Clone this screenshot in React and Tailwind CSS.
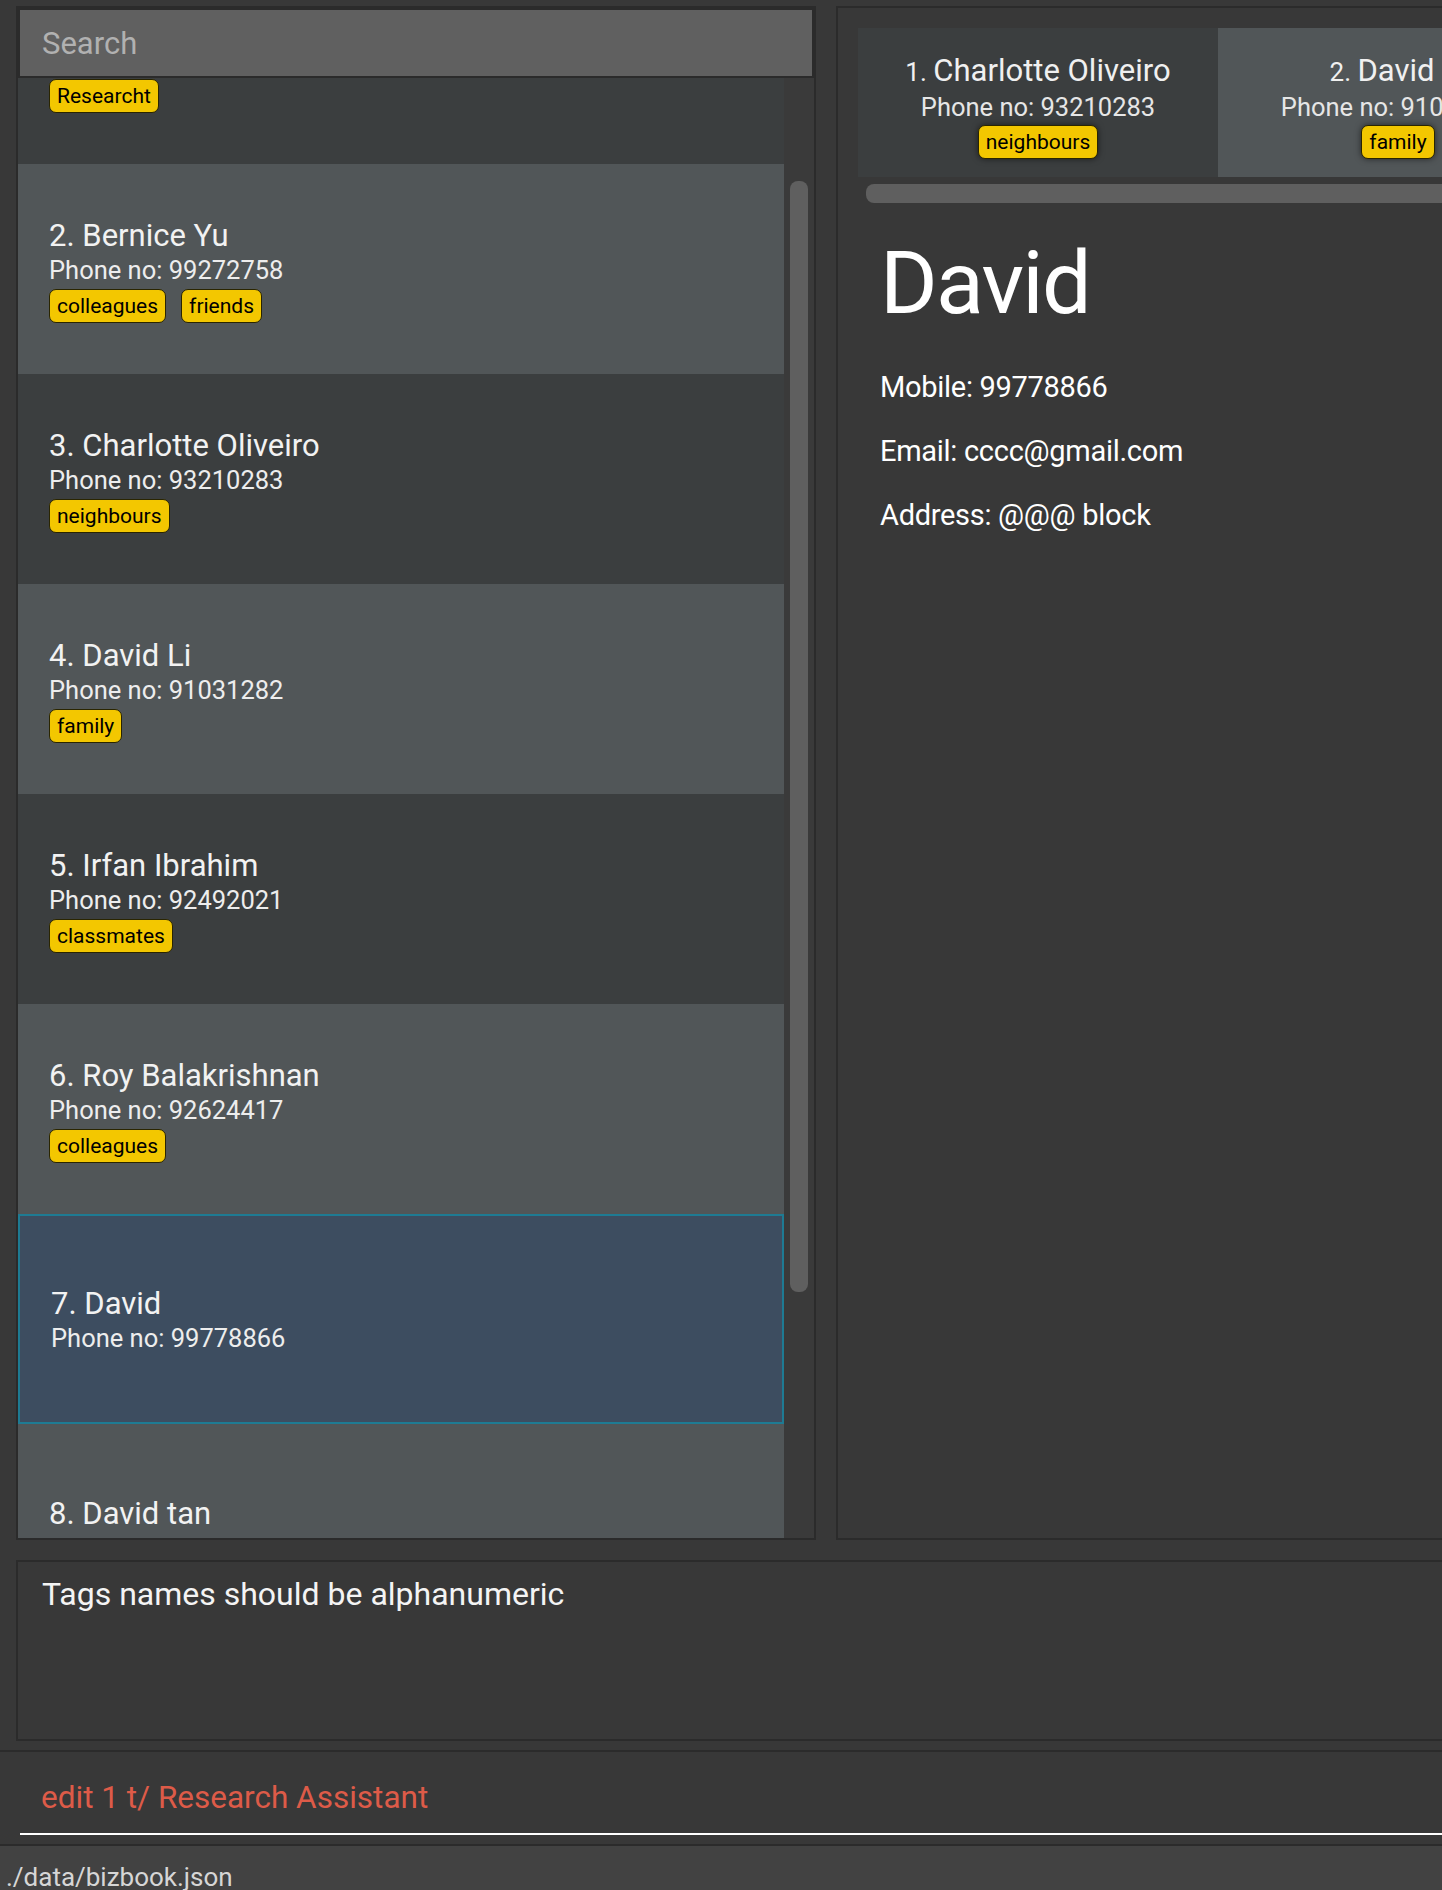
// BizBook main window: person list, pinned cards + detail view, result box, command box, status bar

var people = [
    { name: 'Alex Yeoh', phone: '87438807', tags: ['Researcht'] },
    { name: 'Bernice Yu', phone: '99272758', tags: ['colleagues', 'friends'] },
    { name: 'Charlotte Oliveiro', phone: '93210283', tags: ['neighbours'] },
    { name: 'David Li', phone: '91031282', tags: ['family'] },
    { name: 'Irfan Ibrahim', phone: '92492021', tags: ['classmates'] },
    { name: 'Roy Balakrishnan', phone: '92624417', tags: ['colleagues'] },
    { name: 'David', phone: '99778866', tags: [] },
    { name: 'David tan', phone: '98765432', tags: [] },
];

var pinned = [
    { name: 'Charlotte Oliveiro', phone: '93210283', tags: ['neighbours'] },
    { name: 'David Li', phone: '91031282', tags: ['family'] },
];

var Tag = ({ label, glow }) => (
    <span
        className={
            'inline-block h-[34px] px-[7px] rounded-[7px] border border-[#2a2500] bg-[#f3c700] text-black text-[21px] leading-[32px] ' +
            (glow ? 'shadow-[0_0_6px_rgba(0,0,0,0.55)]' : '')
        }
    >
        {label}
    </span>
);

var PersonCell = ({ index, person, selected }) => {
    var bg = selected
        ? 'bg-[#3d4d60] border-2 border-[#1e7b93] pl-[31px]'
        : index % 2 === 1
            ? 'bg-[#3b3e3f] pl-[31px]'
            : 'bg-[#515658] pl-[31px]';
    return (
        <div className={'h-[210px] shrink-0 flex flex-col justify-center ' + bg}>
            <div className="text-[31px] leading-[40px] text-[#f2f2f2]">
                {index}. {person.name}
            </div>
            <div className="-mt-[1px] text-[25.5px] leading-[31px] text-[#ededed]">
                Phone no: {person.phone}
            </div>
            {person.tags.length > 0 && (
                <div className="mt-[3px] flex gap-[15px]">
                    {person.tags.map((t) => (
                        <Tag key={t} label={t} />
                    ))}
                </div>
            )}
        </div>
    );
};

var PinnedCard = ({ index, person, light }) => (
    <div
        className={
            'w-[360px] h-[149px] shrink-0 flex flex-col items-center justify-center pt-[4px] ' +
            (light ? 'bg-[#515658]' : 'bg-[#3b3e3f]')
        }
    >
        <div className="leading-[40px] text-[#f0f0f0] whitespace-nowrap">
            <span className="text-[26px]">{index}. </span>
            <span className="text-[31px]">{person.name}</span>
        </div>
        <div className="-mt-[4px] text-[25.5px] leading-[31px] text-[#e6e6e6] whitespace-nowrap">
            Phone no: {person.phone}
        </div>
        <div className="mt-[2px] flex gap-[15px]">
            {person.tags.map((t) => (
                <Tag key={t} label={t} glow />
            ))}
        </div>
    </div>
);

export default function App() {
    return (
        <div
            className="w-[1442px] h-[1890px] overflow-hidden bg-[#383838]"
            style={{ fontFamily: 'Roboto, "Liberation Sans", sans-serif' }}
        >
            <div className="w-[1760px] flex flex-col pt-[6px]">
                {/* Top: list + detail */}
                <div className="flex gap-[20px] px-[16px] h-[1534px]">
                    {/* Left panel */}
                    <div className="w-[800px] shrink-0 flex flex-col border-2 border-[#2b2b2b]">
                        <input
                            readOnly
                            placeholder="Search"
                            className="h-[70px] shrink-0 border-2 border-[#2b2b2b] bg-[#606060] pl-[22px] text-[31px] text-white placeholder:text-[#b1b1b1] outline-none"
                        />
                        <div className="flex-1 flex overflow-hidden">
                            <div className="flex-1 overflow-hidden">
                                <div className="flex flex-col -mt-[124px]">
                                    {people.map((p, i) => (
                                        <PersonCell key={i} index={i + 1} person={p} selected={i === 6} />
                                    ))}
                                </div>
                            </div>
                            <div className="w-[30px] shrink-0 bg-[#3a3a3a] pt-[103px] px-[6px]">
                                <div className="h-[1111px] rounded-[8px] bg-[#5f5f5f]" />
                            </div>
                        </div>
                    </div>

                    {/* Right panel */}
                    <div className="flex-1 flex flex-col border-2 border-[#2b2b2b] pt-[20px] pl-[20px]">
                        <div className="flex overflow-hidden">
                            {pinned.map((p, i) => (
                                <PinnedCard key={i} index={i + 1} person={p} light={i === 1} />
                            ))}
                        </div>
                        <div className="mt-[7px] ml-[8px] h-[19px] rounded-[8px] bg-[#5f5f5f]" />
                        <div className="pl-[22px] pt-[36px]">
                            <div className="text-[88px] leading-[88px] tracking-[-0.02em] text-white">David</div>
                            <div className="mt-[42px] flex flex-col gap-[28px] text-[29px] leading-[36px] tracking-[-0.01em] text-white">
                                <div>Mobile: 99778866</div>
                                <div>Email: cccc@gmail.com</div>
                                <div>Address: @@@ block</div>
                            </div>
                        </div>
                    </div>
                </div>

                {/* Result display */}
                <div className="mt-[20px] mx-[16px] h-[181px] border-2 border-[#2b2b2b] pl-[24px] pt-[13px]">
                    <div className="text-[32px] leading-[38px] text-[#f4f4f4]">Tags names should be alphanumeric</div>
                </div>

                {/* Command box */}
                <div className="mt-[9px] h-[96px] border-y-2 border-[#2b2b2b] pl-[20px] pt-[27px]">
                    <div className="pl-[21px] text-[31.5px] leading-[38px] text-[#dd5b48]">edit 1 t/ Research Assistant</div>
                    <div className="mt-[16px] h-[2px] bg-white" />
                </div>

                {/* Status bar */}
                <div className="h-[80px] bg-[#424242] pl-[6px] pt-[16px]">
                    <div className="text-[26px] leading-[31px] text-[#d6d6d6]">./data/bizbook.json</div>
                </div>
            </div>
        </div>
    );
}
